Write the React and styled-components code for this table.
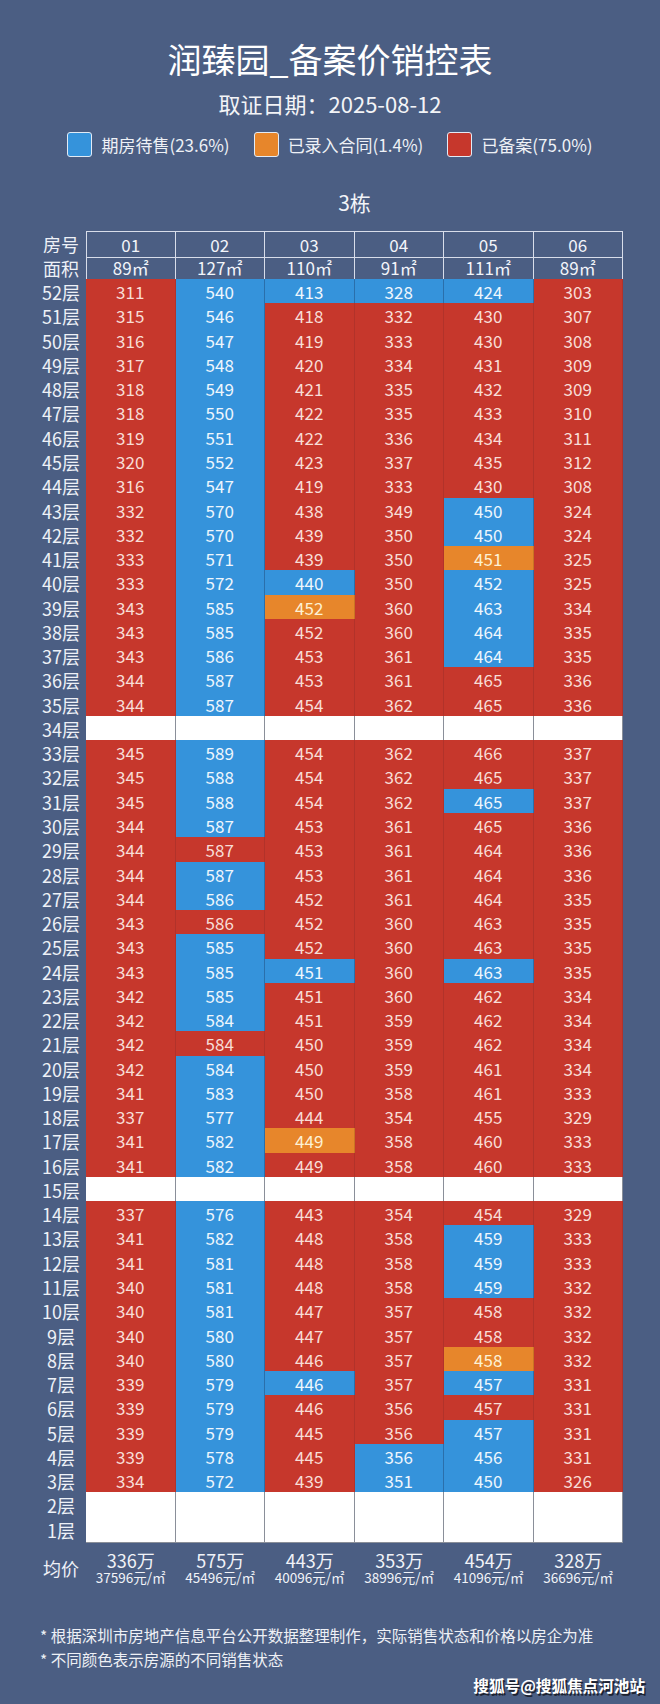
import React from 'react';
import styled, { createGlobalStyle } from 'styled-components';

const BG = '#4b5e83';

const STATUS = {
  R: { bg: '#c6372c', line: '#b2322a', fg: '#f8ddd6' },
  B: { bg: '#3593db', line: '#2a6fab', fg: '#eef6fd' },
  O: { bg: '#e7862b', line: '#c97424', fg: '#fdf1d4' },
  W: { bg: '#ffffff', line: '#8a8f99', fg: '#ffffff' },
};

const ROWS = [
  [52, '311R 540B 413B 328B 424B 303R'],
  [51, '315R 546B 418R 332R 430R 307R'],
  [50, '316R 547B 419R 333R 430R 308R'],
  [49, '317R 548B 420R 334R 431R 309R'],
  [48, '318R 549B 421R 335R 432R 309R'],
  [47, '318R 550B 422R 335R 433R 310R'],
  [46, '319R 551B 422R 336R 434R 311R'],
  [45, '320R 552B 423R 337R 435R 312R'],
  [44, '316R 547B 419R 333R 430R 308R'],
  [43, '332R 570B 438R 349R 450B 324R'],
  [42, '332R 570B 439R 350R 450B 324R'],
  [41, '333R 571B 439R 350R 451O 325R'],
  [40, '333R 572B 440B 350R 452B 325R'],
  [39, '343R 585B 452O 360R 463B 334R'],
  [38, '343R 585B 452R 360R 464B 335R'],
  [37, '343R 586B 453R 361R 464B 335R'],
  [36, '344R 587B 453R 361R 465R 336R'],
  [35, '344R 587B 454R 362R 465R 336R'],
  [34, null],
  [33, '345R 589B 454R 362R 466R 337R'],
  [32, '345R 588B 454R 362R 465R 337R'],
  [31, '345R 588B 454R 362R 465B 337R'],
  [30, '344R 587B 453R 361R 465R 336R'],
  [29, '344R 587R 453R 361R 464R 336R'],
  [28, '344R 587B 453R 361R 464R 336R'],
  [27, '344R 586B 452R 361R 464R 335R'],
  [26, '343R 586R 452R 360R 463R 335R'],
  [25, '343R 585B 452R 360R 463R 335R'],
  [24, '343R 585B 451B 360R 463B 335R'],
  [23, '342R 585B 451R 360R 462R 334R'],
  [22, '342R 584B 451R 359R 462R 334R'],
  [21, '342R 584R 450R 359R 462R 334R'],
  [20, '342R 584B 450R 359R 461R 334R'],
  [19, '341R 583B 450R 358R 461R 333R'],
  [18, '337R 577B 444R 354R 455R 329R'],
  [17, '341R 582B 449O 358R 460R 333R'],
  [16, '341R 582B 449R 358R 460R 333R'],
  [15, null],
  [14, '337R 576B 443R 354R 454R 329R'],
  [13, '341R 582B 448R 358R 459B 333R'],
  [12, '341R 581B 448R 358R 459B 333R'],
  [11, '340R 581B 448R 358R 459B 332R'],
  [10, '340R 581B 447R 357R 458R 332R'],
  [9, '340R 580B 447R 357R 458R 332R'],
  [8, '340R 580B 446R 357R 458O 332R'],
  [7, '339R 579B 446B 357R 457B 331R'],
  [6, '339R 579B 446R 356R 457R 331R'],
  [5, '339R 579B 445R 356R 457B 331R'],
  [4, '339R 578B 445R 356B 456B 331R'],
  [3, '334R 572B 439R 351B 450B 326R'],
  [2, null],
  [1, null],
];

const UNITS = ['01', '02', '03', '04', '05', '06'];
const AREAS = ['89㎡', '127㎡', '110㎡', '91㎡', '111㎡', '89㎡'];
const AVERAGES = [
  ['336万', '37596元/㎡'],
  ['575万', '45496元/㎡'],
  ['443万', '40096元/㎡'],
  ['353万', '38996元/㎡'],
  ['454万', '41096元/㎡'],
  ['328万', '36696元/㎡'],
];

const GlobalStyle = createGlobalStyle`
  html, body {
    margin: 0;
    padding: 0;
    background: ${BG};
  }
  body {
    font-family: "Noto Sans CJK SC", "Noto Sans", sans-serif;
  }
`;

const Page = styled.div`
  width: 660px;
  height: 1704px;
  box-sizing: border-box;
  padding-top: 35px;
  background: ${BG};
  color: #ffffff;
  overflow: hidden;
  display: flex;
  flex-direction: column;
`;

const Title = styled.h1`
  margin: 0;
  font-size: 34px;
  font-weight: 400;
  line-height: 48px;
  text-align: center;
  color: #ffffff;
`;

const Subtitle = styled.div`
  margin-top: 6px;
  font-size: 22px;
  line-height: 28px;
  text-align: center;
  color: #f3f4f7;
`;

const Legend = styled.div`
  margin-top: 15px;
  height: 25px;
  display: flex;
  justify-content: center;
  gap: 24px;
`;

const LegendItem = styled.div`
  display: flex;
  align-items: center;
  gap: 9px;
  font-size: 17px;
  line-height: 25px;
  color: #eef1f6;
`;

const Swatch = styled.span`
  width: 25px;
  height: 25px;
  box-sizing: border-box;
  border: 1.5px solid #e2ebf6;
  border-radius: 3px;
  background: ${(p) => STATUS[p.$s].bg};
`;

const BuildingName = styled.div`
  margin-top: 31px;
  padding-left: 86px;
  padding-right: 37px;
  font-size: 21px;
  line-height: 28px;
  text-align: center;
  color: #f2f4f8;
`;

const Table = styled.div`
  margin-top: 14.6px;
  margin-left: 36px;
  width: 587px;
  display: flex;
  flex-direction: column;
`;

const Row = styled.div`
  display: grid;
  grid-template-columns: 50px repeat(6, 1fr);
  height: 24.27px;
`;

const FloorLabel = styled.div`
  display: flex;
  align-items: center;
  justify-content: center;
  font-size: 18px;
  color: #eef1f7;
  white-space: nowrap;
`;

const HeaderCell = styled.div`
  display: flex;
  align-items: center;
  justify-content: center;
  box-sizing: border-box;
  font-size: 17px;
  color: #f3f5fa;
  border-right: 1px solid #d8ddea;
  border-bottom: 1px solid #d8ddea;
  border-top: ${(p) => (p.$top ? '1px solid #d8ddea' : 'none')};
  &:nth-child(2) {
    border-left: 1px solid #d8ddea;
  }
`;

const Cell = styled.div`
  display: flex;
  align-items: center;
  justify-content: center;
  box-sizing: border-box;
  font-size: 17px;
  background: ${(p) => STATUS[p.$s].bg};
  color: ${(p) => STATUS[p.$s].fg};
  border-right: 1px solid ${(p) => STATUS[p.$s].line};
  border-bottom: 1px solid ${(p) => STATUS[p.$s].line};
`;

const AvgRow = styled.div`
  margin-top: 10px;
  margin-left: 36px;
  width: 587px;
  display: grid;
  grid-template-columns: 50px repeat(6, 1fr);
`;

const AvgLabel = styled.div`
  display: flex;
  align-items: center;
  justify-content: center;
  font-size: 18px;
  color: #eef1f7;
`;

const AvgCell = styled.div`
  display: flex;
  flex-direction: column;
  align-items: center;
  color: #f1f3f8;
`;

const AvgTotal = styled.span`
  font-size: 18px;
  line-height: 18px;
`;

const AvgUnit = styled.span`
  font-size: 13.5px;
  line-height: 16px;
  white-space: nowrap;
`;

const Notes = styled.div`
  margin-top: 38px;
  padding-left: 40px;
  font-size: 15.5px;
  line-height: 24px;
  color: #eef0f5;
`;

const Watermark = styled.div`
  margin-top: 4px;
  padding-right: 15px;
  text-align: right;
  font-size: 15.6px;
  font-weight: 700;
  line-height: 20px;
  color: #ffffff;
  text-shadow: 1.5px 1.5px 0 #1d2230;
`;

export default function App() {
  return (
    <Page>
      <GlobalStyle />
      <Title>润臻园_备案价销控表</Title>
      <Subtitle>取证日期：2025-08-12</Subtitle>
      <Legend>
        <LegendItem>
          <Swatch $s="B" />
          期房待售(23.6%)
        </LegendItem>
        <LegendItem>
          <Swatch $s="O" />
          已录入合同(1.4%)
        </LegendItem>
        <LegendItem>
          <Swatch $s="R" />
          已备案(75.0%)
        </LegendItem>
      </Legend>
      <BuildingName>3栋</BuildingName>
      <Table>
        <Row>
          <FloorLabel>房号</FloorLabel>
          {UNITS.map((u) => (
            <HeaderCell key={u} $top>
              {u}
            </HeaderCell>
          ))}
        </Row>
        <Row>
          <FloorLabel>面积</FloorLabel>
          {AREAS.map((a, i) => (
            <HeaderCell key={i}>{a}</HeaderCell>
          ))}
        </Row>
        {ROWS.map(([floor, data]) => {
          const cells = data
            ? data.split(' ').map((t) => ({ v: t.slice(0, -1), s: t.slice(-1) }))
            : UNITS.map(() => ({ v: '', s: 'W' }));
          return (
            <Row key={floor}>
              <FloorLabel>{floor}层</FloorLabel>
              {cells.map((c, i) => (
                <Cell key={i} $s={c.s}>
                  {c.v}
                </Cell>
              ))}
            </Row>
          );
        })}
      </Table>
      <AvgRow>
        <AvgLabel>均价</AvgLabel>
        {AVERAGES.map(([t, u], i) => (
          <AvgCell key={i}>
            <AvgTotal>{t}</AvgTotal>
            <AvgUnit>{u}</AvgUnit>
          </AvgCell>
        ))}
      </AvgRow>
      <Notes>
        <div>* 根据深圳市房地产信息平台公开数据整理制作，实际销售状态和价格以房企为准</div>
        <div>* 不同颜色表示房源的不同销售状态</div>
      </Notes>
      <Watermark>搜狐号@搜狐焦点河池站</Watermark>
    </Page>
  );
}
